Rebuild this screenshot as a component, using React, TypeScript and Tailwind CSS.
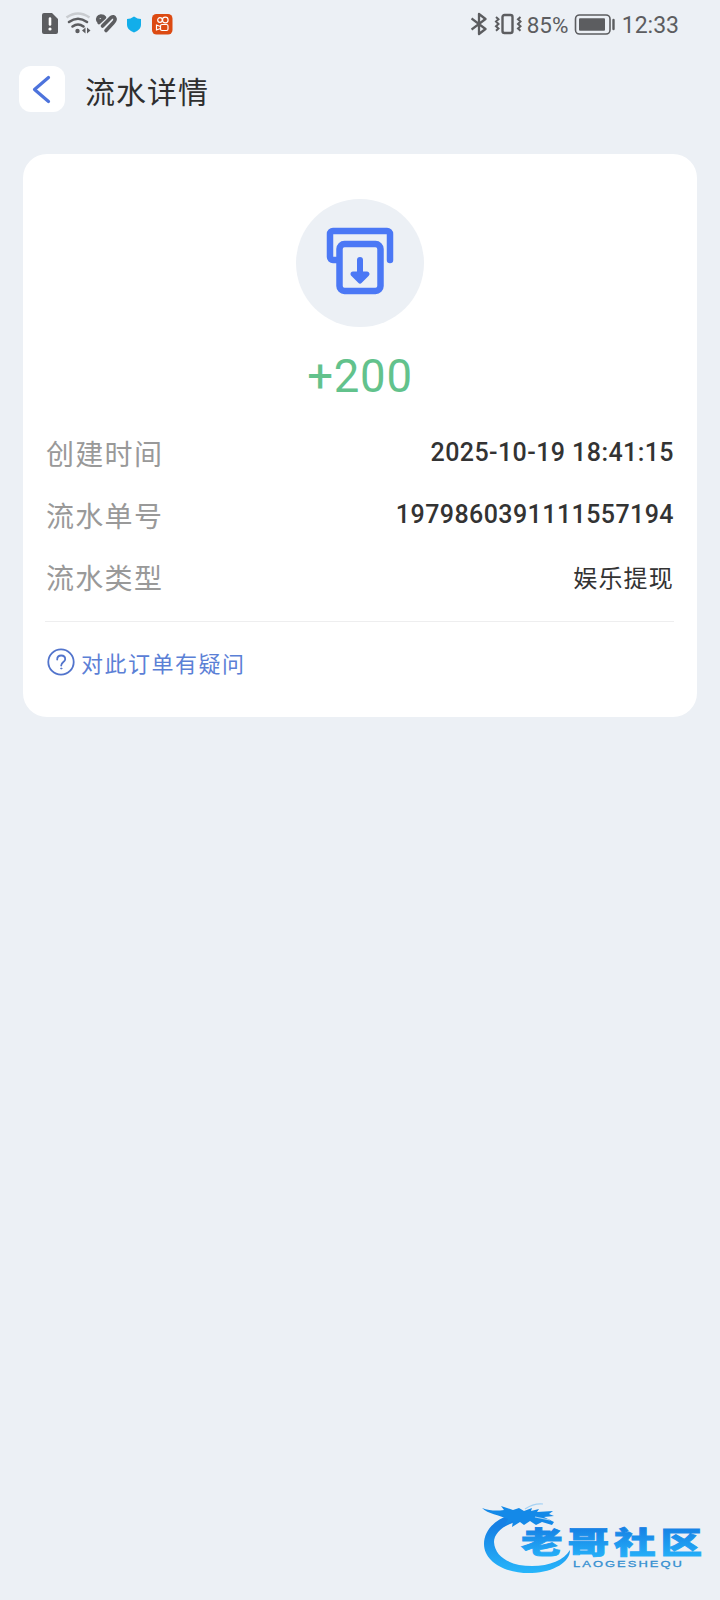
import type { FC, ReactNode } from "react";

const cjk = /*tw:*/ "font-['Noto_Sans_CJK_SC',sans-serif]";
const roboto = /*tw:*/ "font-[Roboto,sans-serif]";

const StatusBar: FC = () => (
  <div className="flex h-12 items-center justify-between pr-[41px] pl-[41px] text-[#5c5d60]">
    <svg className="h-6 w-[134px]" viewBox="0 0 134 24" fill="none">
      {/* sim alert */}
      <path d="M3 1h8l6 6v13a2 2 0 0 1-2 2H3a2 2 0 0 1-2-2V3a2 2 0 0 1 2-2z" fill="currentColor" />
      <path d="M9 6.500v6" stroke="#fff" strokeWidth="2.600" strokeLinecap="round" />
      <circle cx="9" cy="17" r="1.600" fill="#fff" />
      {/* wifi */}
      <path d="M25.500 5.500q11.500-8 23 0" stroke="#c9ccd0" strokeWidth="2.600" />
      <path d="M28 10q9-6.500 18 0M31.500 14.500q5.500-4 11 0" stroke="currentColor" strokeWidth="2.600" strokeLinecap="round" />
      <circle cx="36.500" cy="19" r="2.200" fill="currentColor" />
      <path d="m44.500 15.500-3.500 3 3.500 3zM46 15.500l3.500 3-3.500 3z" fill="currentColor" />
      {/* health */}
      <g stroke="currentColor" strokeWidth="3.600" strokeLinecap="round" strokeLinejoin="round">
        <path d="M57 8.500q-1-4 3-4.500 2.500 0 3.500 1.500l-5.500 5" />
        <path d="m61.500 14 8.500-8.500q3-2 4 1 .5 2-2 4.500l-7 7.500" />
      </g>
      {/* shield */}
      <path d="M93 4.500q3.500 2.500 7 2.500v6q0 5-7 7.500-7-2.500-7-7.500V7q3.500 0 7-2.500z" fill="#12aeea" />
      {/* video app */}
      <rect x="111" y="2" width="20.500" height="20.500" rx="4.500" fill="#dc4a12" />
      <g stroke="#fff" strokeWidth="1.200">
        <circle cx="119" cy="8" r="2.300" />
        <circle cx="124.300" cy="8" r="2.800" />
        <rect x="119.500" y="12.500" width="7.500" height="6" rx="1.500" />
        <path d="m119.500 14.500-4-1.500v5l4-1.500" />
      </g>
    </svg>
    <div className="flex items-center">
      <svg className="h-6 w-[54px]" viewBox="0 0 54 24" fill="none" stroke="currentColor">
        <path d="M.5 6.500 14.500 17 8 22V2l6.500 5L.5 17.500" strokeWidth="2.300" strokeLinejoin="round" />
        <rect x="31.500" y="3" width="10" height="18" rx="2" strokeWidth="2.400" />
        <path d="m25 5 2.500 2.300L25 9.600l2.500 2.300-2.500 2.300 2.500 2.300L25 18.800M49.500 5 47 7.300l2.500 2.300-2.500 2.300 2.500 2.300-2.500 2.300 2.500 2.300" strokeWidth="2" />
      </svg>
      <span className={`${roboto} ml-[2px] w-[43px] pt-px text-[22.500px] leading-6`}>85%</span>
      <svg className="ml-1 h-6 w-[42px]" viewBox="0 0 42 24" fill="none">
        <rect x="1.500" y="3" width="34.500" height="19" rx="4" stroke="currentColor" strokeWidth="1.600" />
        <rect x="5" y="6.200" width="26" height="12.600" rx="1" fill="currentColor" />
        <path d="M39.500 8v9" stroke="currentColor" strokeWidth="2.400" strokeLinecap="round" />
      </svg>
      <span className={`${roboto} ml-[6px] pt-[3px] text-[23px] leading-6`}>12:33</span>
    </div>
  </div>
);

const Header: FC = () => (
  <header className="flex h-[84px] items-start pt-[18px] pl-[19px]">
    <button type="button" aria-label="返回" className="flex size-[46px] items-center justify-center rounded-xl bg-white">
      <svg className="size-[46px]" viewBox="0 0 46 46" fill="none">
        <path d="M29.500 11.500 15.500 23.500l14 12" stroke="#4d73dc" strokeWidth="3.200" strokeLinecap="round" strokeLinejoin="round" />
      </svg>
    </button>
    <h1 className={`${cjk} ml-5 pt-px text-[30px] text-[#2f2f2f] leading-[46px] tracking-[1px]`}>流水详情</h1>
  </header>
);

const DetailRow: FC<{ label: string; children: ReactNode }> = ({ label, children }) => (
  <div className="flex h-[62px] items-center justify-between">
    <span className={`${cjk} -mt-px text-[#999] text-[28px] leading-10 tracking-[1.300px]`}>{label}</span>
    {children}
  </div>
);

const valueClasses = /*tw:*/ "font-['Roboto','Noto_Sans_CJK_SC',sans-serif] text-[#333] leading-9";

const CommunityLogo: FC = () => (
  <svg className="h-[80px] w-[230px]" viewBox="0 0 230 80">
    <defs>
      <linearGradient id="brand" x1="0" y1="0" x2="0" y2="1">
        <stop offset="0.200" stopColor="#1680e4" />
        <stop offset="1" stopColor="#27b6fb" />
      </linearGradient>
    </defs>
    {/* dragon body and head */}
    <path d="M30 15C14 20 4 31 4 44c0 18 22 30 48 29 22-1 38-11 38-23-6 10-20 16-38 16-20 0-37-8-38-24 0-9 10-18 26-21z" fill="url(#brand)" />
    <path
      d="M2 8c8 3 15 3 22 2l-3-4 12 4 6-2 5 3 8-3-1 3 8-2-2 3 16-1-4 3 5 2-10 1 10 5-2 3-10-3-6 3-6-4-6 4-4-3-8 5 1-6-8 4 3-6c-9-4-20-5-26-11z"
      fill="#1489e8"
    />
    <path d="M45 9q9-6 18-5M55 17l15 3" stroke="#a5d1f3" strokeWidth="1.200" fill="none" />
    <g
      className="font-['Noto_Sans_CJK_SC',sans-serif] font-black"
      fill="url(#brand)"
      stroke="url(#brand)"
      strokeWidth="0.900"
      fontSize="32"
      transform="translate(41 53) scale(1.300 0.930)"
    >
      <text x="0 35.800 71.600 107.400" y="0">老哥社区</text>
    </g>
    <text
      x="93"
      y="67"
      textLength="111"
      lengthAdjust="spacingAndGlyphs"
      className="font-['Liberation_Sans',sans-serif] tracking-[1.500px]"
      fontSize="9.500"
      fill="#348fd0"
      stroke="#348fd0"
      strokeWidth="0.300"
    >
      LAOGESHEQU
    </text>
  </svg>
);

export default function App() {
  return (
    <div className="flex h-[1600px] w-[720px] flex-col bg-[#ecf0f5]">
      <StatusBar />
      <Header />
      <main className="mx-[23px] mt-[22px] flex h-[563px] flex-col rounded-3xl bg-white px-[23px] pt-[45px]">
        <div className="flex size-32 items-center justify-center self-center rounded-full bg-[#ecf0f5]">
          <svg className="size-32" viewBox="0 0 128 128" fill="none" stroke="#4b78f5" strokeLinecap="round" strokeLinejoin="round">
            <path d="M42 61h-5a3 3 0 0 1-3-3V35a3 3 0 0 1 3-3h54a3 3 0 0 1 3 3v26" strokeWidth="6.500" />
            <rect x="43.500" y="45" width="41" height="47" rx="5" strokeWidth="6.500" />
            <path d="M64 61v18" strokeWidth="6" />
            <path d="m57 75 7 7 7-7z" fill="#4b78f5" strokeWidth="5" />
          </svg>
        </div>
        <div className={`${roboto} mt-[21px] text-center text-[#62c28c] text-[45.500px] leading-[58px] tracking-[0.800px]`}>+200</div>
        <div className="mt-4">
          <DetailRow label="创建时间">
            <span className={`${valueClasses} font-medium text-[25px] tracking-[0.430px]`}>2025-10-19 18:41:15</span>
          </DetailRow>
          <DetailRow label="流水单号">
            <span className={`${valueClasses} font-medium text-[25px] tracking-[0.430px]`}>1979860391111557194</span>
          </DetailRow>
          <DetailRow label="流水类型">
            <span className={`${valueClasses} pt-[3px] text-[24px] tracking-[1.200px]`}>娱乐提现</span>
          </DetailRow>
        </div>
        <div className="mt-[13px] -ml-px h-px bg-[#eeeeef]" />
        <a className="mt-[22px] ml-px flex h-9 items-center gap-[6px]">
          <svg className="size-7" viewBox="0 0 28 28" fill="none" stroke="#5274cc" strokeLinecap="round">
            <circle cx="14" cy="14" r="12.700" strokeWidth="1.800" />
            <path d="M10.200 11.500q0-4 4-4t4 3.700c0 2.800-4 3-4 6.300" strokeWidth="1.800" />
            <circle cx="14.200" cy="20.500" r="0.600" />
          </svg>
          <span className={`${cjk} text-[#5b80d6] text-[22px] leading-9 tracking-[1.500px]`}>对此订单有疑问</span>
        </a>
      </main>
      <footer className="mt-auto flex justify-end pr-[10px] pb-[20px]">
        <CommunityLogo />
      </footer>
    </div>
  );
}
